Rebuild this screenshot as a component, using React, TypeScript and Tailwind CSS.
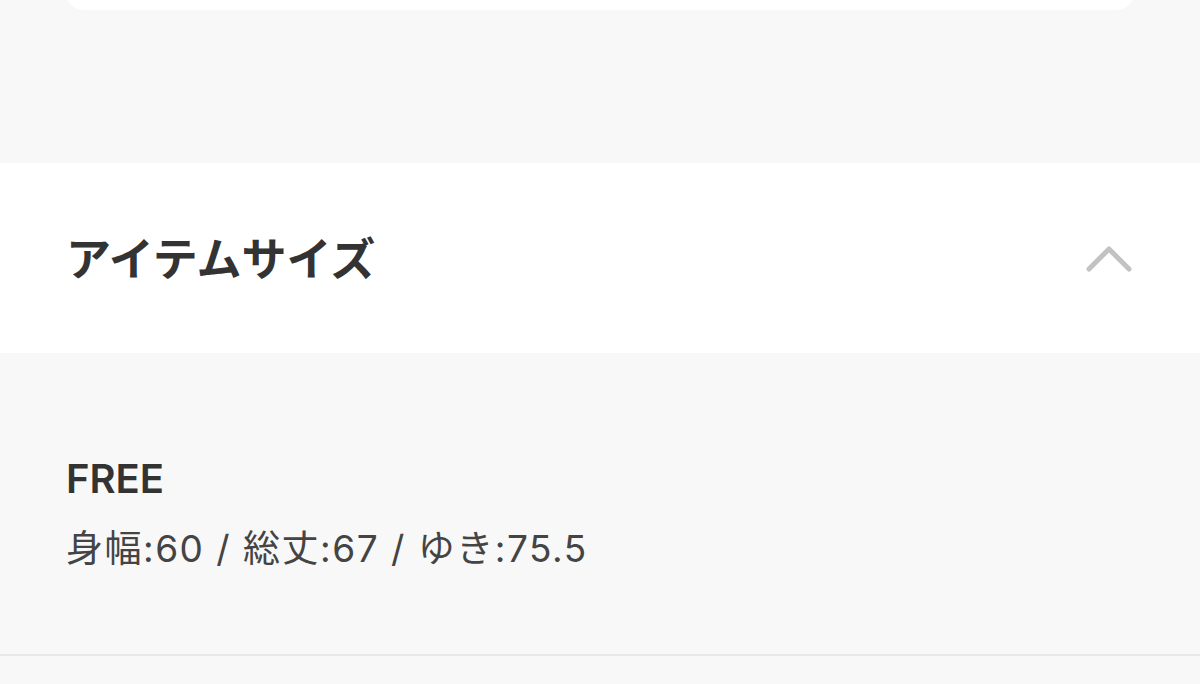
export default function App() {
  return (
    <div
      className="min-h-[684px] w-[1200px] bg-[#f8f8f8] overflow-hidden"
      style={{ fontFamily: 'Inter, "Noto Sans CJK JP", sans-serif' }}
    >
      {/* bottom edge of the previous card */}
      <div className="mx-[65px] -mt-[30px] h-[40px] rounded-[20px] bg-white" />

      <div className="h-[153px]" />

      <section className="bg-white">
        <div className="flex h-[190px] items-center justify-between pl-[66px] pr-[68px]">
          <h2 className="pt-[3px] text-[45px] font-bold leading-none text-[#333333]">アイテムサイズ</h2>
          <svg width="46" height="28" viewBox="0 0 46 28" fill="none" className="text-[#c2c2c2]">
            <polyline
              points="3,25 23,5 43,25"
              stroke="currentColor"
              strokeWidth="5"
              strokeLinecap="round"
              strokeLinejoin="round"
            />
          </svg>
        </div>
      </section>

      <div className="h-[301px] px-[66px] pt-[102px]">
        <p className="text-[40px] font-semibold leading-[48px] text-[#333333]">FREE</p>
        <p className="mt-[22px] text-[37px] leading-[48px] tracking-[1.5px] text-[#444444]">
          身幅:60 / 総丈:67 / ゆき:75.5
        </p>
      </div>

      <div className="h-[2px] bg-[#e8e8e8]" />
    </div>
  );
}
